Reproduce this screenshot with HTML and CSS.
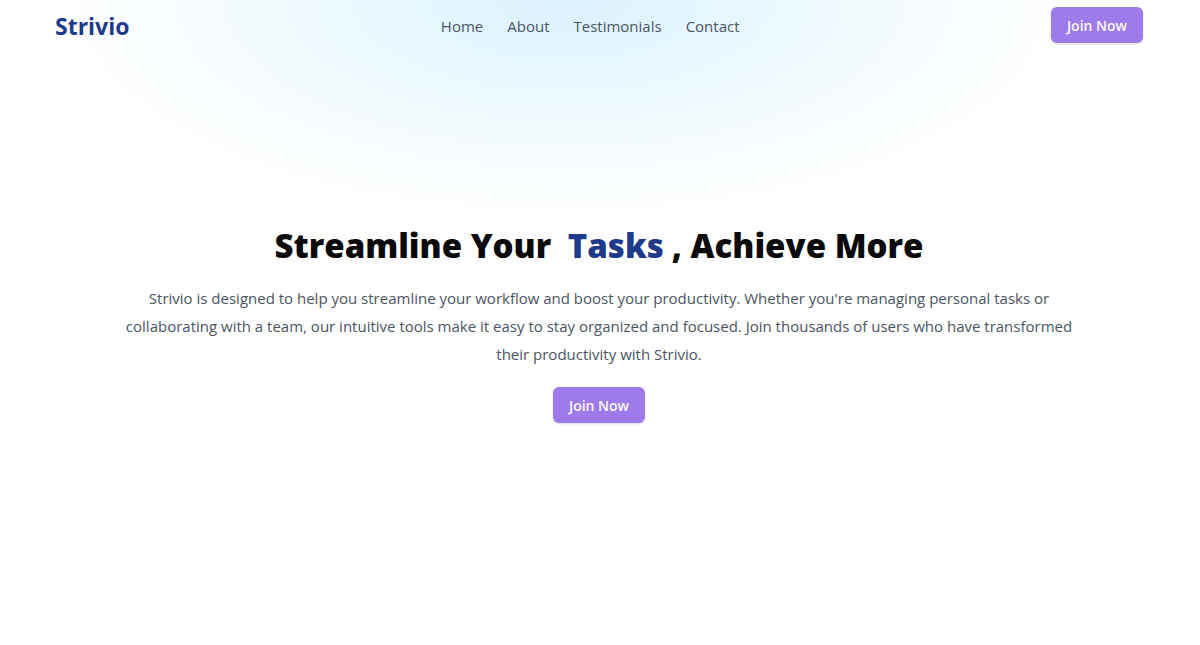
FILE: index.html
```html
<!DOCTYPE html>
<html lang="en">
<head>
<meta charset="utf-8">
<meta name="viewport" content="width=device-width, initial-scale=1">
<title>Strivio</title>
<link rel="stylesheet" href="styles.css">
</head>
<body>
<header class="header">
  <a class="logo" href="#">Strivio</a>
  <nav class="nav" aria-label="Main">
    <a class="nav-link" href="#home">Home</a>
    <a class="nav-link" href="#about">About</a>
    <a class="nav-link" href="#testimonials">Testimonials</a>
    <a class="nav-link" href="#contact">Contact</a>
  </nav>
  <button class="button" type="button">Join Now</button>
</header>
<main class="hero" id="home">
  <h1 class="title">Streamline Your <span class="accent">Tasks</span>, Achieve More</h1>
  <p class="lead">Strivio is designed to help you streamline your workflow and boost your productivity. Whether you're managing personal tasks or collaborating with a team, our intuitive tools make it easy to stay organized and focused. Join thousands of users who have transformed their productivity with Strivio.</p>
  <button class="button" type="button">Join Now</button>
</main>
</body>
</html>
```
FILE: styles.css
```css
* {
  box-sizing: border-box;
}

body {
  margin: 0;
  min-height: 100vh;
  padding: 7px 57px 0 55px;
  display: flex;
  flex-direction: column;
  font-family: "Segoe UI", "Open Sans", "Noto Sans", sans-serif;
  font-size: 15px;
  line-height: 24px;
  color: #0a0a0a;
  background: radial-gradient(ellipse 43% 224px at 47% 0, #dcf2ff, #e7f7ff 36%, #f1f9ff 58%, #f8fdff 76%, #fff) no-repeat #fff;
}

.header {
  display: flex;
  justify-content: space-between;
  align-items: center;
}

.logo {
  padding-top: 2px;
  font-size: 23px;
  line-height: 32px;
  font-weight: 700;
  color: #1e3a8a;
  text-decoration: none;
}

.nav {
  display: flex;
  gap: 24px;
  padding-top: 2px;
}

.nav-link {
  color: #4b5563;
  text-decoration: none;
}

.button {
  height: 36px;
  padding: 2px 16px 0;
  border: 0;
  border-radius: 6px;
  background: #9f7aea;
  color: #fafafa;
  font-family: inherit;
  font-size: 14px;
  line-height: 20px;
  font-weight: 600;
  box-shadow: 0 1px 3px rgba(0, 0, 0, 0.1), 0 1px 2px rgba(0, 0, 0, 0.06);
}

.hero {
  flex: 1;
  display: flex;
  flex-direction: column;
  align-items: center;
  justify-content: center;
  padding: 0 56px 40px;
  text-align: center;
}

.title {
  margin: 0 0 18px;
  font-size: 33px;
  line-height: 40px;
  font-weight: 800;
}

.accent {
  padding: 0 8px;
  color: #1e3a8a;
}

.lead {
  margin: 0 0 19px;
  line-height: 28px;
  color: #4b5563;
}
```
